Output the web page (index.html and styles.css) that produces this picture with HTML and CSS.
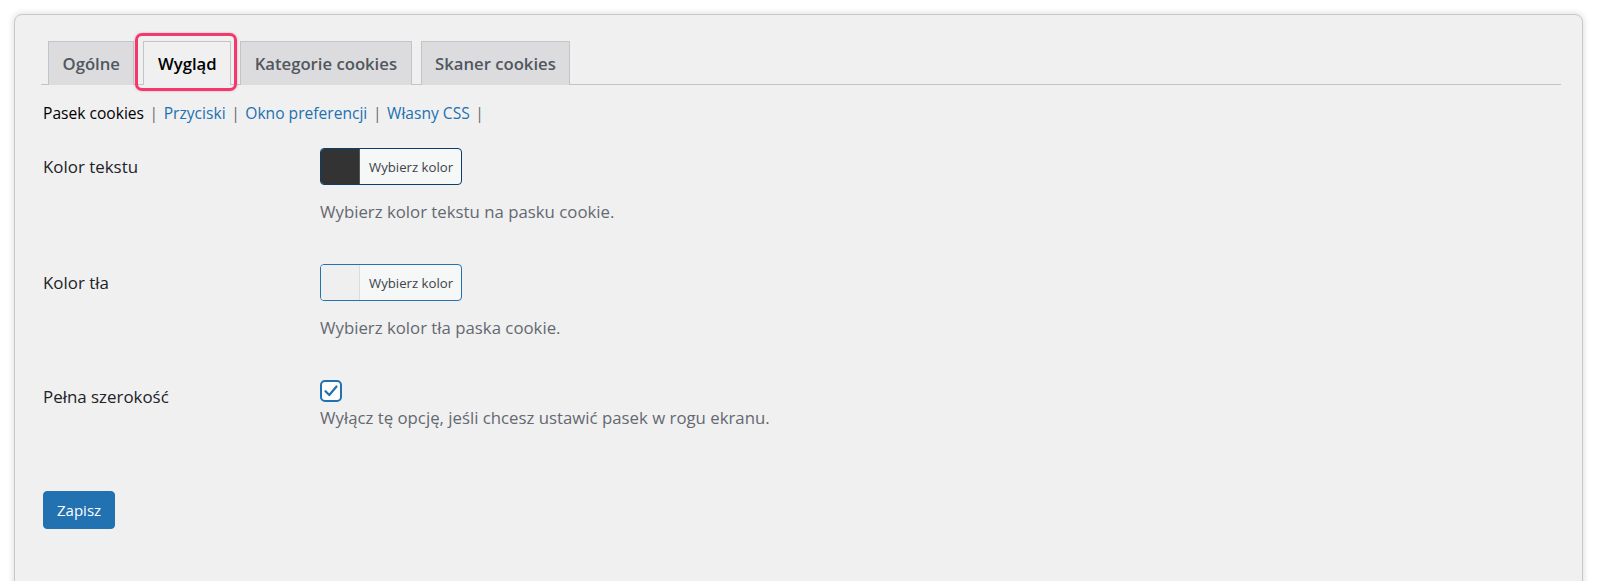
FILE: index.html
```html
<!DOCTYPE html>
<html lang="pl">
<head>
    <meta charset="UTF-8">
    <meta name="viewport" content="width=device-width, initial-scale=1.0">
    <title>Ustawienia cookies - Wygląd</title>
    <link rel="stylesheet" href="styles.css">
</head>
<body>

<div class="panel">
    <!-- Main tabs -->
    <nav class="tabs">
        <a href="#" class="tab">Ogólne</a>
        <a href="#" class="tab active">Wygląd<span class="highlight"></span></a>
        <a href="#" class="tab">Kategorie cookies</a>
        <a href="#" class="tab">Skaner cookies</a>
    </nav>

    <!-- Sub sections -->
    <div class="subnav">
        <span class="current">Pasek cookies</span>
        <span class="sep">|</span>
        <a href="#">Przyciski</a>
        <span class="sep">|</span>
        <a href="#">Okno preferencji</a>
        <span class="sep">|</span>
        <a href="#">Własny CSS</a>
        <span class="sep">|</span>
    </div>

    <form class="settings" onsubmit="return false;">
        <div class="row">
            <div class="label">Kolor tekstu</div>
            <div class="field">
                <button type="button" class="color-btn focused">
                    <span class="swatch dark"></span>
                    <span class="color-text">Wybierz kolor</span>
                </button>
                <p class="desc">Wybierz kolor tekstu na pasku cookie.</p>
            </div>
        </div>

        <div class="row">
            <div class="label">Kolor tła</div>
            <div class="field">
                <button type="button" class="color-btn">
                    <span class="swatch light"></span>
                    <span class="color-text">Wybierz kolor</span>
                </button>
                <p class="desc">Wybierz kolor tła paska cookie.</p>
            </div>
        </div>

        <div class="row">
            <div class="label label-check">Pełna szerokość</div>
            <div class="field">
                <label class="checkbox">
                    <svg viewBox="0 0 22 22" width="22" height="22">
                        <rect x="1" y="1" width="20" height="20" rx="4" fill="#fff" stroke="#2271b1" stroke-width="2"/>
                        <path d="M5.5 11.2 L9.3 15 L16.5 6.5" fill="none" stroke="#2271b1" stroke-width="2.2" stroke-linecap="round" stroke-linejoin="round"/>
                    </svg>
                </label>
                <p class="desc desc-check">Wyłącz tę opcję, jeśli chcesz ustawić pasek w rogu ekranu.</p>
            </div>
        </div>

        <button type="submit" class="save">Zapisz</button>
    </form>
</div>

</body>
</html>
```

FILE: styles.css
```css
html, body {
    margin: 0;
    padding: 0;
    height: 581px;
    overflow: hidden;
}
body {
    background: #fff;
    font-family: "Open Sans", "Noto Sans", sans-serif;
    color: #1d2327;
}
.panel {
    margin: 14px 17px 0 14px;
    height: 563px;
    background: #f0f0f1;
    border: 1px solid #c8c8c8;
    border-radius: 8px;
    box-shadow: 0 0 6px 1px rgba(0, 0, 0, 0.13);
    padding: 26px 21px 0 26px;
}
.tabs {
    display: flex;
    gap: 9px;
    padding-left: 7px;
    border-bottom: 1px solid #c3c4c7;
}
.tab {
    position: relative;
    display: block;
    padding: 9px 13.5px;
    line-height: 25px;
    font-size: 16.7px;
    font-weight: 600;
    color: #50575e;
    text-decoration: none;
    background: #dcdcde;
    border: 1px solid #c3c4c7;
    border-bottom: none;
    margin-bottom: -1px;
}
.tab.active {
    background: #f0f0f1;
    color: #000;
}
.highlight {
    position: absolute;
    left: -9px;
    right: -7px;
    top: -9px;
    bottom: -6px;
    border: 3px solid #f0396c;
    border-radius: 7px;
    box-shadow: 0 0 2px rgba(240, 57, 108, 0.5);
}
.subnav {
    margin-top: 16px;
    padding-left: 2px;
    line-height: 24px;
    font-size: 15.6px;
}
.subnav .current {
    color: #000;
}
.subnav a {
    color: #2271b1;
    text-decoration: none;
}
.subnav .sep {
    color: #646970;
    margin: 0 1.5px;
}
.settings {
    margin-top: 23px;
    padding-left: 2px;
}
.row {
    display: grid;
    grid-template-columns: 277px 1fr;
    margin-bottom: 40px;
}
.label {
    padding-top: 7px;
    line-height: 24px;
    font-size: 16.9px;
    color: #1d2327;
}
.label-check {
    padding-top: 5px;
}
.color-btn {
    display: flex;
    align-items: stretch;
    height: 37px;
    padding: 0;
    background: #f6f7f7;
    border: 1px solid #2271b1;
    border-radius: 4px;
    overflow: hidden;
    cursor: pointer;
    font-family: inherit;
}
.color-btn.focused {
    border-color: #0a3e6e;
}
.swatch {
    width: 38px;
    border-right: 1px solid #c3c4c7;
}
.swatch.dark {
    background: #333;
    border-right-color: #555;
}
.swatch.light {
    background: #efefef;
    border-right-color: #dcdcde;
}
.color-text {
    display: flex;
    align-items: center;
    padding: 0 8px 0 9px;
    font-size: 13.2px;
    color: #3c434a;
}
.desc {
    margin: 15px 0 0;
    line-height: 24px;
    font-size: 16.8px;
    color: #646970;
}
.desc-check {
    margin-top: 4px;
}
.checkbox {
    display: block;
    width: 22px;
    height: 22px;
    cursor: pointer;
}
.checkbox svg {
    display: block;
}
.save {
    display: block;
    height: 38px;
    margin-top: 61px;
    padding: 0 13px;
    background: #2271b1;
    border: 1px solid #2271b1;
    border-radius: 4px;
    color: #fff;
    font-family: inherit;
    font-size: 15px;
    cursor: pointer;
}
```
